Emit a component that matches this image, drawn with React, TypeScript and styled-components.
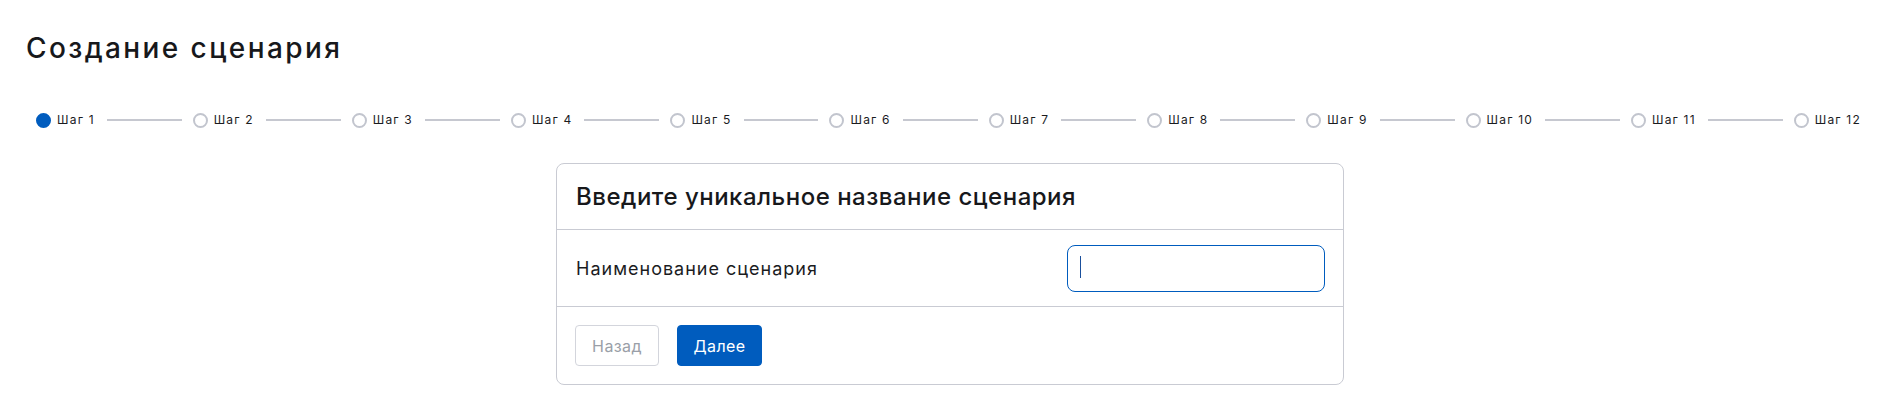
import React from "react";
import styled, { createGlobalStyle } from "styled-components";

const GlobalStyle = createGlobalStyle`
  html, body {
    margin: 0;
    padding: 0;
    background: #ffffff;
  }
  body {
    font-family: Inter, "Noto Sans", "Liberation Sans", sans-serif;
    color: #1b1c1f;
  }
  * { box-sizing: border-box; }
`;

const Page = styled.div`
  width: 1900px;
  padding-top: 30px;
`;

const Head = styled.header`
  padding: 0 39px 0 26px;
`;

const Title = styled.h1`
  margin: 0;
  font-size: 28px;
  line-height: 36px;
  font-weight: 500;
  letter-spacing: 2.4px;
  color: #17181b;
`;

const Stepper = styled.div`
  display: flex;
  align-items: center;
  height: 24px;
  margin: 42px 0 0 10px;
`;

const Step = styled.div`
  display: flex;
  align-items: center;
  gap: 6px;
  flex: none;
`;

const Dot = styled.span<{ $active?: boolean }>`
  width: 15px;
  height: 15px;
  border-radius: 50%;
  flex: none;
  background: ${(p) => (p.$active ? "#005cbe" : "#ffffff")};
  border: 2px solid ${(p) => (p.$active ? "#005cbe" : "#c2c5ce")};
`;

const StepLabel = styled.span`
  font-size: 12px;
  line-height: 16px;
  letter-spacing: 1.2px;
  color: #1b1c1f;
  white-space: nowrap;
`;

const Connector = styled.span`
  flex: 1;
  height: 2px;
  background: #c6c8d0;
  margin: 0 11px 0 12px;
`;

const Card = styled.section`
  width: 788px;
  margin: 31px auto 0;
  border: 1px solid #c9cbd3;
  border-radius: 8px;
  background: #fff;
`;

const CardHeader = styled.div`
  height: 66px;
  display: flex;
  align-items: center;
  padding: 0 19px;
  border-bottom: 1px solid #c9cbd3;
`;

const CardTitle = styled.h2`
  margin: 0;
  font-size: 24px;
  font-weight: 500;
  letter-spacing: 0.5px;
  color: #17181b;
`;

const CardBody = styled.div`
  height: 77px;
  display: flex;
  align-items: center;
  justify-content: space-between;
  padding: 0 18px 0 19px;
  border-bottom: 1px solid #c9cbd3;
`;

const FieldLabel = styled.label`
  font-size: 18px;
  color: #1b1c1f;
  letter-spacing: 1px;
`;

const InputWrap = styled.div`
  position: relative;
  width: 258px;
  height: 47px;
`;

const TextInput = styled.input`
  width: 100%;
  height: 100%;
  border: 1px solid #005cbe;
  border-radius: 8px;
  outline: none;
  padding: 0 12px;
  font-family: inherit;
  font-size: 16px;
  caret-color: transparent;
  background: #fff;
`;

const Caret = styled.span`
  position: absolute;
  left: 13px;
  top: 11px;
  width: 1px;
  height: 22px;
  background: #1a4f9c;
  pointer-events: none;
`;

const CardFooter = styled.div`
  height: 77px;
  display: flex;
  align-items: center;
  gap: 18px;
  padding: 0 18px;
`;

const Button = styled.button<{ $primary?: boolean; $w: number }>`
  width: ${(p) => p.$w}px;
  height: 41px;
  border-radius: 4px;
  font-family: inherit;
  font-size: 16px;
  letter-spacing: 0.4px;
  cursor: pointer;
  border: 1px solid ${(p) => (p.$primary ? "#005cbe" : "#d3d5dc")};
  background: ${(p) => (p.$primary ? "#005cbe" : "#ffffff")};
  color: ${(p) => (p.$primary ? "#ffffff" : "#9a9fa8")};
`;

const steps = Array.from({ length: 12 }, (_, i) => i + 1);

export default function App() {
  return (
    <>
      <GlobalStyle />
      <Page>
        <Head>
          <Title>Создание сценария</Title>
          <Stepper>
            {steps.map((n) => (
              <React.Fragment key={n}>
                <Step>
                  <Dot $active={n === 1} />
                  <StepLabel>Шаг {n}</StepLabel>
                </Step>
                {n < steps.length && <Connector />}
              </React.Fragment>
            ))}
          </Stepper>
        </Head>
        <Card>
          <CardHeader>
            <CardTitle>Введите уникальное название сценария</CardTitle>
          </CardHeader>
          <CardBody>
            <FieldLabel htmlFor="scenario-name">Наименование сценария</FieldLabel>
            <InputWrap>
              <TextInput id="scenario-name" type="text" />
              <Caret />
            </InputWrap>
          </CardBody>
          <CardFooter>
            <Button $w={84} disabled>
              Назад
            </Button>
            <Button $w={85} $primary>
              Далее
            </Button>
          </CardFooter>
        </Card>
      </Page>
    </>
  );
}
